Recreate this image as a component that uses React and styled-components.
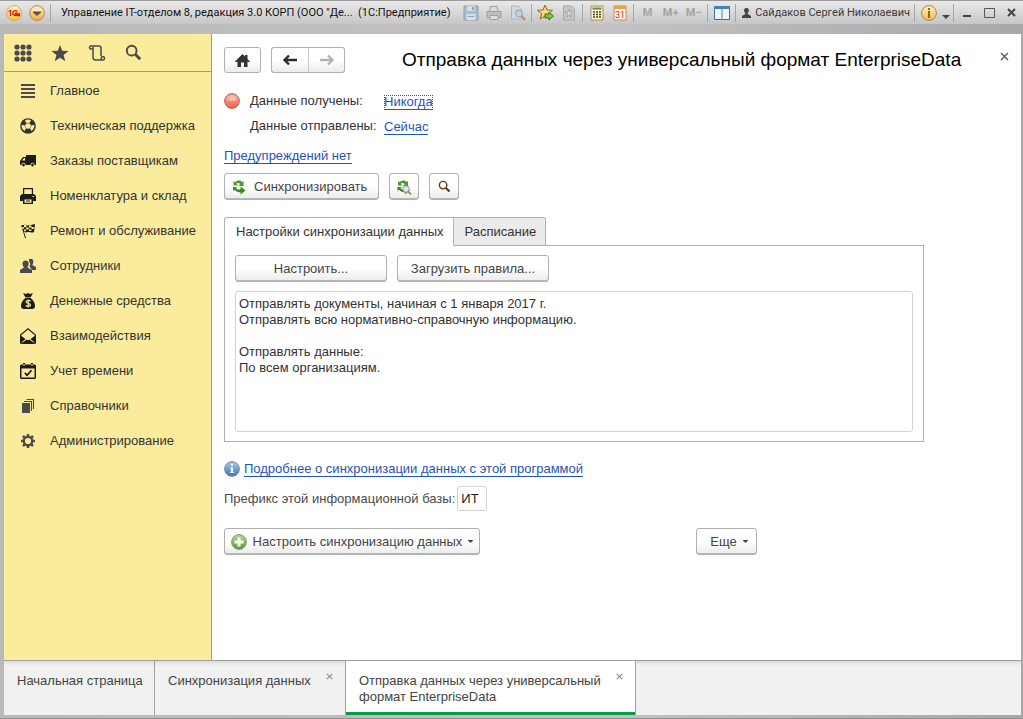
import React from 'react';
import styled, { createGlobalStyle } from 'styled-components';

const GlobalStyle = createGlobalStyle`
  * { box-sizing: border-box; }
  body {
    margin: 0;
    font-family: "Liberation Sans", Arial, sans-serif;
    font-size: 13px;
    line-height: 16px;
    color: #333;
  }
  button, input, textarea { font: inherit; color: inherit; }
  svg { display: block; flex: none; }
`;

const Window = styled.div`
  display: flex;
  flex-direction: column;
  min-height: 100vh;
  padding: 0 2px 3px 4px;
  border-top: 1px solid #9a9a9a;
  border-bottom: 1px solid #8f8f8f;
  background: linear-gradient(90deg, #b9b9b9, #c2c2c2 60%, #a8a8ab);
`;

const TitleBar = styled.header`
  display: flex;
  align-items: center;
  height: 23px;
  margin: 0 -2px 10px -4px;
  padding: 0 1px 0 2px;
  background: linear-gradient(#e9e9e9, #d8d8d8 50%, #c6c6c6);
  font-family: Roboto, "Open Sans", sans-serif;
  font-size: 11px;
  color: #111;
`;

const BarButton = styled.button`
  display: flex;
  align-items: center;
  justify-content: center;
  flex: none;
  width: ${(p) => p.$width || 23}px;
  height: 22px;
  padding: 0;
  border: 0;
  background: none;
  font-size: 11px;
  font-weight: 700;
  color: #a9a19b;
`;

const BarLine = styled.span`
  flex: none;
  width: 1px;
  height: 18px;
  margin: 0 2px;
  background: #a5a5a5;
`;

const WindowTitle = styled.span`
  flex: 1;
  padding-left: 8px;
  white-space: nowrap;
`;

const User = styled.span`
  display: flex;
  align-items: center;
  gap: 4px;
  padding: 0 2px 0 4px;
  white-space: nowrap;
  color: #3c3c3c;
`;

const Body = styled.div`
  display: flex;
  flex: 1;
`;

const Sidebar = styled.aside`
  flex: none;
  width: 208px;
  border-right: 1px solid #b9a31c;
  background: #fbec9d;
`;

const SideTools = styled.div`
  display: flex;
  align-items: center;
  height: 38px;
  margin-bottom: 1px;
  border-bottom: 1px solid #b9a31c;
`;

const SideTool = styled.button`
  display: flex;
  justify-content: center;
  width: 37px;
  padding: 0;
  border: 0;
  background: none;
  color: #4a4a4a;
`;

const NavItem = styled.a`
  display: flex;
  align-items: center;
  gap: 14px;
  height: 35px;
  padding-left: 16px;
  color: #333;
  text-decoration: none;
  white-space: nowrap;
`;

const Page = styled.main`
  flex: 1;
  min-width: 0;
  padding: 12px 12px 20px;
  background: #fff;
`;

const PageHead = styled.div`
  display: flex;
  align-items: center;
  gap: 10px;
`;

const Title = styled.h1`
  flex: 1;
  margin: 0 0 0 47px;
  font-size: 19px;
  line-height: 28px;
  font-weight: 400;
  color: #000;
  white-space: nowrap;
`;

const CloseButton = styled.button`
  display: flex;
  padding: ${(p) => (p.$small ? 0 : '0 0 8px')};
  border: 0;
  background: none;
  color: ${(p) => (p.$small ? '#8a8a8a' : '#555')};
`;

const Button = styled.button`
  display: flex;
  align-items: center;
  justify-content: center;
  flex: none;
  gap: 6px;
  width: ${(p) => (p.$width ? `${p.$width}px` : 'auto')};
  height: ${(p) => p.$height || 27}px;
  padding: ${(p) => p.$padding || 0};
  border: 1px solid #b0b0b0;
  border-radius: 3px;
  box-shadow: ${(p) => (p.$height ? 'none' : 'inset 0 -1px #b8b8b8')};
  background: linear-gradient(#fff 50%, #ebebeb);
  color: #444;
  white-space: nowrap;
`;

const ButtonPair = styled.div`
  display: flex;

  & > button:first-child { border-radius: 3px 0 0 3px; border-right-color: #c8c8c8; }
  & > button:last-child { border-radius: 0 3px 3px 0; border-left: 0; }
`;

const Status = styled.dl`
  display: grid;
  grid-template-columns: 16px 124px auto;
  justify-content: start;
  column-gap: 10px;
  row-gap: 8px;
  margin: 19px 0 13px;

  dt { grid-column: 2; white-space: nowrap; }
  dd { margin: 0; padding-top: 1px; }
  svg { grid-row: 1; }
`;

const Link = styled.a`
  display: inline-block;
  border-bottom: 1px solid #1f55b5;
  outline: ${(p) => (p.$focused ? '1px dotted #555' : 'none')};
  outline-offset: -1px;
  line-height: 14px;
  color: #1f55b5;
  text-decoration: none;
`;

const Actions = styled.div`
  display: flex;
  gap: 10px;
  margin: 9px 0 17px;
`;

const Content = styled.div`
  max-width: 700px;
`;

const TabList = styled.div`
  display: flex;
  margin-bottom: -1px;
`;

const Tab = styled.button`
  height: 29px;
  padding: 0 9px 0 11px;
  border: 1px solid #b0b0b0;
  border-bottom-color: ${(p) => (p.$active ? '#fff' : '#b0b0b0')};
  border-left-width: ${(p) => (p.$active ? 1 : 0)}px;
  border-radius: ${(p) => (p.$active ? '3px 0 0 0' : '0 2px 0 0')};
  background: ${(p) => (p.$active ? '#fff' : '#ebebeb')};
  position: relative;
`;

const Panel = styled.section`
  padding: 9px 10px;
  border: 1px solid #b0b0b0;
`;

const PanelButtons = styled.div`
  display: flex;
  gap: 10px;
  margin-bottom: 9px;
`;

const Rules = styled.textarea`
  display: block;
  width: 100%;
  height: 141px;
  padding: 4px 3px;
  border: 1px solid #d2d2d2;
  border-radius: 3px;
  resize: none;
  outline: none;
`;

const Info = styled.div`
  display: flex;
  align-items: center;
  gap: 4px;
  margin: 19px 0 9px;
`;

const Prefix = styled.div`
  display: flex;
  align-items: center;
  gap: 2px;
  color: #4a4a4a;

  input {
    width: 30px;
    height: 25px;
    padding: 0 3px;
    border: 1px solid #d2d2d2;
    border-radius: 3px;
    color: #222;
  }
`;

const BottomActions = styled.div`
  display: flex;
  justify-content: space-between;
  max-width: 533px;
  margin-top: 17px;
`;

const WindowTabs = styled.nav`
  display: flex;
  height: 55px;
  border-top: 1px solid #a0a0a0;
  background: linear-gradient(#dcdcdc, #f1f1f1 5px);
`;

const WindowTab = styled.div`
  display: flex;
  align-items: flex-start;
  justify-content: space-between;
  width: ${(p) => p.$width}px;
  padding: 12px 12px 0 13px;
  border-right: 1px solid #a0a0a0;
  background: ${(p) => (p.$active ? '#fff' : 'none')};
  box-shadow: ${(p) => (p.$active ? 'inset 0 -3px #0a9a4c' : 'none')};
  white-space: ${(p) => (p.$active ? 'normal' : 'nowrap')};

  a { color: #444; text-decoration: none; }
`;

const Caret = () => (
  <svg width="5" height="3" viewBox="0 0 5 3"><path d="M0 0h5v.5L2.500 3 0 .5z" fill="#444" /></svg>
);

const Cross = ({ size = 9 }) => (
  <svg width={size} height={size} viewBox="0 0 9 9" stroke="currentColor" strokeWidth="1.3">
    <path d="M1 1l7 7M8 1L1 8" />
  </svg>
);

const Arrow = ({ flip, color }) => (
  <svg width="16" height="14" viewBox="0 0 16 14" fill="none" stroke={color} strokeWidth="2.4">
    <path d={flip ? 'M1 7h12M9 2.500l4.500 4.500L9 11.500' : 'M15 7H3M7 2.500L2.500 7 7 11.500'} />
  </svg>
);

const Orb = ({ id, size = 16, colors, stroke, children }) => (
  <svg width={size} height={size} viewBox="0 0 16 16">
    <defs>
      <linearGradient id={id} x1="0" y1="0" x2="0" y2="1">
        <stop offset="0" stopColor={colors[0]} />
        <stop offset="1" stopColor={colors[1]} />
      </linearGradient>
    </defs>
    <circle cx="8" cy="8" r="7.4" fill={`url(#${id})`} stroke={stroke} />
    {children}
  </svg>
);

const SyncArrows = () => (
  <g>
    <path d="M2 6.500V2l1.500 1.200C5.500 1 9 1 10.500 3L12 2v5H7l1.800-1.800C7.500 3.800 5.800 3.800 4.800 4.800L6.500 6.500z" fill="#4a9c2c" />
    <path d="M1.500 8h4.300L4.500 9.300c1 1.500 3 1.700 4.500.7V7.500l5 4-5 4v-2.300c-2.500.3-4.700-.5-5.800-2.400L1.500 12z" fill="#338f1a" />
  </g>
);

const Magnifier = ({ size = 14, color = '#5b3c0c', width = 1.5 }) => (
  <svg width={size} height={size} viewBox="0 0 14 14" fill="none" stroke={color}>
    <circle cx="5.500" cy="5.500" r="4" strokeWidth={width} />
    <path d="M8.500 8.500l4 4" strokeWidth={width + 0.8} />
  </svg>
);

const NavIcon = ({ children }) => (
  <svg width="16" height="16" viewBox="0 0 16 16" fill="#1c1c1c">{children}</svg>
);

const navItems = [
  ['Главное', <path d="M1 1h14v2H1zM1 5h14v2H1zM1 9h14v2H1zM1 13h14v2H1z" fill="#4a4a4a" />],
  ['Техническая поддержка', (
    <g>
      <circle cx="8" cy="8" r="7.800" fill="#333" />
      <circle cx="8" cy="8" r="2.800" fill="#fbec9d" />
      <path d="M5 2.300C7 1.200 9.500 1.200 11 2.300L9.500 5C8.500 4.500 7 4.500 6 5zM14.300 7c.2 2.500-.8 4.500-2.800 6L10 10.300c1-.8 1.500-2 1.300-3zM1.600 7c-.2 2.500.8 4.500 2.900 6L6 10.300c-1-.8-1.500-2-1.300-3z" fill="#fbec9d" />
    </g>
  )],
  ['Заказы поставщикам', (
    <g>
      <path d="M6 2h10v10H0V8l3-4h3z" />
      <path d="M2 7.500L4 5h1v2.500z" fill="#fbec9d" />
      <circle cx="3.500" cy="12" r="1.800" stroke="#fbec9d" strokeWidth=".8" /><circle cx="12.500" cy="12" r="1.800" stroke="#fbec9d" strokeWidth=".8" />
    </g>
  )],
  ['Номенклатура и склад', (
    <g>
      <path d="M3 0h10v6h1l2 2v5h-3v3H3v-3H0V8l2-2h1z" />
      <path d="M4.200 1.200h7.600V6H4.200zM4.500 11.500h7v3.300h-7zM12.500 8h1.500v1h-1.500z" fill="#fbec9d" />
      <path d="M6 12.500h4v1H6z" />
    </g>
  )],
  ['Ремонт и обслуживание', (
    <g>
      <path d="M1 2c2 1 3-1 5 0s5 0 9-1l-1 8c-3 1.500-4-.5-6 0s-2 .5-4 0l2 6H5z" />
      <path d="M4 2h2.500v2.200H4zM9 2.500h2.500v2H9zM6.200 4.500h2.600v2H6.200zM11.500 4h2.300v2h-2.300zM4 6.500h2v1.800H4zM9 6.500h2.300V8H9zM2 4h1.800v2H2.500z" fill="#fbec9d" />
    </g>
  )],
  ['Сотрудники', (
    <g fill="#4a4a4a">
      <path d="M9 1.500C10 .2 13 .2 13.300 3c.3 2-.5 3-1 4l3.700 2v3h-4L9.500 8.500c1-2 1-4-.5-5z" />
      <path d="M2.500 5.500C2.500 1.500 8.700 1.500 8.700 5.500c0 2-1 3-1.200 4L12 12v3H0v-3l4-2.500c-.5-1-1.500-2-1.500-4z" />
    </g>
  )],
  ['Денежные средства', (
    <g>
      <path d="M3 0l3 1 2-1 2 1 3-1-2.500 4.500h-5zM5.500 5h5c3 2 4.500 5 4.500 8 0 2-1 3-3 3H4c-2 0-3-1-3-3 0-3 1.500-6 4.500-8z" />
      <path d="M10.500 8.200C9 7 5.800 7.300 6 9c.2 1.800 4.500 1 4.500 3 0 1.800-3.500 1.800-4.800.5M8.200 6.500v8" fill="none" stroke="#fbec9d" strokeWidth="1.200" />
    </g>
  )],
  ['Взаимодействия', (
    <g>
      <path d="M.6 7L8 .8 15.400 7v8H.6z" fill="none" stroke="#1c1c1c" strokeWidth="1.100" />
      <path d="M0 7l5.500 4L0 16zM16 7l-5.500 4L16 16zM1 16l5.500-4.500L8 12.300l1.500-.8L15 16z" />
    </g>
  )],
  ['Учет времени', (
    <g>
      <path d="M1 1.500h2V0h2v1.500h6V0h2v1.500h2l1 1V15l-1 1H1l-1-1V2.500z" />
      <path d="M1.500 5.500h13v9h-13z" fill="#fbec9d" />
      <path d="M4.800 9.800l2.300 2.500L11.500 7.300" fill="none" stroke="#111" strokeWidth="1.700" />
      <path d="M4 1v2M12 1v2" stroke="#fbec9d" />
    </g>
  )],
  ['Справочники', (
    <g fill="#4a4a4a">
      <path d="M2 5h8v10H2z" />
      <path d="M4 3.500h7.500V13M6.500 1.500h7V11" fill="none" stroke="#4a4a4a" strokeWidth="1.100" />
    </g>
  )],
  ['Администрирование', (
    <g fill="none" stroke="#4a4a4a">
      <circle cx="8" cy="8" r="4.200" strokeWidth="2.200" />
      <path d="M8 1v2.500M8 12.500V15M1 8h2.500M12.500 8H15M3 3l1.800 1.800M11.200 11.200L13 13M13 3l-1.800 1.800M4.800 11.200L3 13" strokeWidth="2.600" />
    </g>
  )],
];

const rulesText = `Отправлять документы, начиная с 1 января 2017 г.
Отправлять всю нормативно-справочную информацию.

Отправлять данные:
По всем организациям.`;

const TopBar = () => (
  <TitleBar>
    <BarButton aria-label="1С">
      <Orb id="logo" colors={['#fffbd0', '#f8c23a']} stroke="#d9a558">
        <path d="M2.500 6.500l2-1V11M11.500 6.500C9.500 4.800 6.800 6 6.800 8s1.700 2.500 3.200 2.500h4M11 8.300c-1-.8-2 0-1.500.7H14" fill="none" stroke="#d42012" strokeWidth="1.300" />
      </Orb>
    </BarButton>
    <BarButton aria-label="Меню">
      <Orb id="menu" colors={['#fdeecb', '#f0a944']} stroke="#b98a4c">
        <path d="M4 6.500h8v1l-4 3.500-4-3.500z" fill="#6b5132" />
        <path d="M3.500 5h9" stroke="#fff" />
      </Orb>
    </BarButton>
    <BarLine />
    <WindowTitle>Управление IT-отделом 8, редакция 3.0 КОРП (ООО "Де...&nbsp; (1С:Предприятие)</WindowTitle>
    <BarButton aria-label="Сохранить">
      <svg width="16" height="16" viewBox="0 0 16 16">
        <path d="M1 1h14v14H1z" fill="#a9bccb" stroke="#8ca3b5" />
        <path d="M4 1h8v5H4zM3.500 9h9v6h-9z" fill="#d8dfe4" /><path d="M9 2h2v3H9zM5 11h6v1H5z" fill="#8ca3b5" />
      </svg>
    </BarButton>
    <BarButton $width={24} aria-label="Печать">
      <svg width="16" height="16" viewBox="0 0 16 16" stroke="#a39d98">
        <path d="M4 1.500h7l1 5H4z" fill="#d9dde3" /><path d="M1 6.500h14v6H1z" fill="#c5bdb5" /><path d="M4 10.500h8v4H4z" fill="#ddd" />
      </svg>
    </BarButton>
    <BarButton aria-label="Просмотр">
      <svg width="16" height="16" viewBox="0 0 16 16" fill="none">
        <path d="M1.500 1h7l3 3v10h-10z" fill="#ccd9df" stroke="#a3b7c2" /><circle cx="9" cy="8.500" r="3.500" fill="#bcd0da" stroke="#91a6b2" />
        <path d="M11.500 11l3.500 4" stroke="#b08f82" strokeWidth="2" />
      </svg>
    </BarButton>
    <BarLine />
    <BarButton aria-label="В избранное">
      <svg width="17" height="17" viewBox="0 0 17 17">
        <path d="M8 1l2 5 5.500.3-4.200 3.500 1.500 5.200L8 12l-4.800 3 1.500-5.200L.5 6.300 6 6z" fill="#fbd97b" stroke="#8c6a30" />
        <path d="M8 10h4V8l4.500 4-4.500 4v-2H8z" fill="#77c63c" stroke="#3b7a1c" />
      </svg>
    </BarButton>
    <BarButton aria-label="Избранное">
      <svg width="14" height="16" viewBox="0 0 14 16">
        <path d="M1.500 1h8l3 3v11h-11z" fill="#c3c7ca" stroke="#a5abb0" /><path d="M7 4l1 2.800h3L8.500 9l1 3L7 10.200 4.500 12l1-3L3 6.800h3z" fill="#d8d8d8" stroke="#9a9fa3" strokeWidth=".8" />
      </svg>
    </BarButton>
    <BarLine />
    <BarButton aria-label="Калькулятор">
      <svg width="14" height="16" viewBox="0 0 14 16">
        <path d="M1 1h12v14H1z" fill="#fff3cf" stroke="#b08c55" /><path d="M2.500 2.500h9v2h-9z" fill="#4f9b43" />
        <path d="M3 7h8M3 9.500h8M3 12h8" stroke="#4b4030" strokeWidth="1.500" strokeDasharray="2 1" />
      </svg>
    </BarButton>
    <BarButton aria-label="Календарь">
      <svg width="14" height="16" viewBox="0 0 14 16">
        <path d="M1 1h12v14H1z" fill="#fff8ea" stroke="#c98b5a" /><path d="M1 1h12v3H1z" fill="#f0a04c" />
        <text x="7" y="13" textAnchor="middle" fontSize="9" fontWeight="400" fill="#d42a12">31</text>
      </svg>
    </BarButton>
    <BarLine />
    <BarButton>M</BarButton>
    <BarButton>M+</BarButton>
    <BarButton>M−</BarButton>
    <BarLine />
    <BarButton aria-label="Панели">
      <svg width="16" height="14" viewBox="0 0 16 14"><path d="M.5.5h15v13H.5z" fill="#eef6fc" stroke="#3e6f9e" /><path d="M0 0h16v3H0zM7.500 2h1v12h-1z" fill="#4b80b2" /></svg>
    </BarButton>
    <BarLine />
    <User>
      <svg width="9" height="10" viewBox="0 0 9 10" fill="#444"><path d="M4.500 0C8 0 7 4 5.700 5v1L9 8v2H0V8l3.300-2V5C2 4 1 0 4.500 0z" /></svg>
      Сайдаков Сергей Николаевич
    </User>
    <BarLine />
    <BarButton aria-label="Справка">
      <Orb id="help" colors={['#fff1c2', '#f3b94c']} stroke="#a98858">
        <path d="M7 3h2v2H7zM7 6h2v7H7z" fill="#6d7a1c" />
      </Orb>
    </BarButton>
    <BarButton $width={11} aria-label="Ещё">
      <svg width="8" height="12" viewBox="0 0 8 12"><path d="M0 8h8L4 12z" fill="#444" /></svg>
    </BarButton>
    <BarLine />
    <BarButton $width={22} aria-label="Свернуть">
      <svg width="8" height="11" viewBox="0 0 8 11"><path d="M0 8h8v2H0z" fill="#444" /></svg>
    </BarButton>
    <BarButton $width={22} aria-label="Развернуть">
      <svg width="11" height="10" viewBox="0 0 11 10"><path d="M.5.5h10v9H.5z" fill="none" stroke="#555" /></svg>
    </BarButton>
    <BarButton $width={22} aria-label="Закрыть">
      <svg width="9" height="9" viewBox="0 0 9 9"><path d="M1 1l7 7M8 1L1 8" stroke="#444" strokeWidth="2" /></svg>
    </BarButton>
  </TitleBar>
);

const Navigation = () => (
  <Sidebar>
    <SideTools>
      <SideTool aria-label="Разделы">
        <svg width="18" height="18" viewBox="0 0 18 18" fill="currentColor">
          {[3, 9, 15].map((y) => [3, 9, 15].map((x) => <circle key={`${x}-${y}`} cx={x} cy={y} r="2.600" />))}
        </svg>
      </SideTool>
      <SideTool aria-label="Избранное">
        <svg width="18" height="18" viewBox="0 0 18 18" fill="currentColor"><path d="M9 1l2.200 5.700 6.300.4-4.900 4 1.700 6.200L9 13.800l-5.300 3.500 1.700-6.200-4.900-4 6.300-.4z" /></svg>
      </SideTool>
      <SideTool aria-label="История">
        <svg width="18" height="18" viewBox="0 0 18 18" fill="none" stroke="currentColor" strokeWidth="1.500">
          <path d="M5 5H3C1 5 1 2 3 2h8c1.500 0 2 .8 2 2v8M5 3v10c0 1.500.8 3 2.500 3H15c2 0 2-3.500 0-3.500-1.500 0-1.800.5-1.800 1.500 0 1 .5 2 1.500 2" />
        </svg>
      </SideTool>
      <SideTool aria-label="Поиск"><Magnifier size={17} color="currentColor" width={1.6} /></SideTool>
    </SideTools>
    <nav>
      {navItems.map(([name, icon]) => (
        <NavItem href="#" key={name}><NavIcon>{icon}</NavIcon>{name}</NavItem>
      ))}
    </nav>
  </Sidebar>
);

const App = () => (
  <>
    <GlobalStyle />
    <Window>
      <TopBar />
      <Body>
        <Navigation />
        <Page>
          <PageHead>
            <Button $width={37} $height={26} aria-label="Домой">
              <svg width="15" height="13" viewBox="0 0 15 13" fill="#333"><path d="M7.500 0L10 2.500V1h2.500v4L15 7.500l-1 .8-1.500-.8V13H9V8.500H6V13H2.500V7.500L1 8.300 0 7.500z" /></svg>
            </Button>
            <ButtonPair>
              <Button $width={38} $height={26} aria-label="Назад"><Arrow color="#2b2b2b" /></Button>
              <Button $width={36} $height={26} aria-label="Вперед"><Arrow flip color="#b3b3b3" /></Button>
            </ButtonPair>
            <Title>Отправка данных через универсальный формат EnterpriseData</Title>
            <CloseButton aria-label="Закрыть"><Cross /></CloseButton>
          </PageHead>

          <Status>
            <Orb id="red" colors={['#f7b3a4', '#f2603f']} stroke="#a5685c">
              <path d="M3 6.500C4 2 12 2 13 6.500 10 8.500 6 8.500 3 6.500z" fill="#fff" opacity=".35" />
            </Orb>
            <dt>Данные получены:</dt>
            <dd><Link href="#" $focused>Никогда</Link></dd>
            <dt>Данные отправлены:</dt>
            <dd><Link href="#">Сейчас</Link></dd>
          </Status>
          <Link href="#">Предупреждений нет</Link>

          <Actions>
            <Button $padding="0 11px 0 6px">
              <svg width="17" height="16" viewBox="0 0 16 16"><SyncArrows /></svg>
              Синхронизировать
            </Button>
            <Button $width={30} aria-label="Состав данных">
              <svg width="16" height="16" viewBox="0 0 16 16">
                <SyncArrows />
                <circle cx="10" cy="10" r="3.200" fill="#dfe8f2" stroke="#999" /><path d="M12.300 12.500l2.700 3" stroke="#b5634c" strokeWidth="1.600" />
              </svg>
            </Button>
            <Button $width={30} aria-label="Найти"><Magnifier size={13} /></Button>
          </Actions>

          <Content>
            <TabList role="tablist">
              <Tab role="tab" aria-selected="true" $active>Настройки синхронизации данных</Tab>
              <Tab role="tab" aria-selected="false">Расписание</Tab>
            </TabList>
            <Panel>
              <PanelButtons>
                <Button $width={152}>Настроить...</Button>
                <Button $width={152}>Загрузить правила...</Button>
              </PanelButtons>
              <Rules aria-label="Правила отправки данных" readOnly defaultValue={rulesText} />
            </Panel>
          </Content>

          <Info>
            <Orb id="info" colors={['#a8cdec', '#3676b4']} stroke="#7c8fa3">
              <path d="M7 3h2v2H7zM6 6.500h3V11h1v1H6v-1h1V7.500H6z" fill="#fff" />
            </Orb>
            <Link href="#">Подробнее о синхронизации данных с этой программой</Link>
          </Info>
          <Prefix>
            <label htmlFor="prefix">Префикс этой информационной базы:</label>
            <input id="prefix" defaultValue="ИТ" />
          </Prefix>
          <BottomActions>
            <Button $width={256}>
              <Orb id="plus" colors={['#b4dc92', '#569a35']} stroke="#7d9a6c">
                <path d="M6.500 3.500h3v3h3v3h-3v3h-3v-3h-3v-3h3z" fill="#fff" />
              </Orb>
              Настроить синхронизацию данных
              <Caret />
            </Button>
            <Button $width={61} $padding="0 5px 0 10px">Еще <Caret /></Button>
          </BottomActions>
        </Page>
      </Body>
      <WindowTabs>
        <WindowTab $width={151}><a href="#">Начальная страница</a></WindowTab>
        <WindowTab $width={191}>
          <a href="#">Синхронизация данных</a>
          <CloseButton $small aria-label="Закрыть"><Cross size={7} /></CloseButton>
        </WindowTab>
        <WindowTab $width={290} $active>
          <a href="#">Отправка данных через универсальный формат EnterpriseData</a>
          <CloseButton $small aria-label="Закрыть"><Cross size={7} /></CloseButton>
        </WindowTab>
      </WindowTabs>
    </Window>
  </>
);

export default App;
